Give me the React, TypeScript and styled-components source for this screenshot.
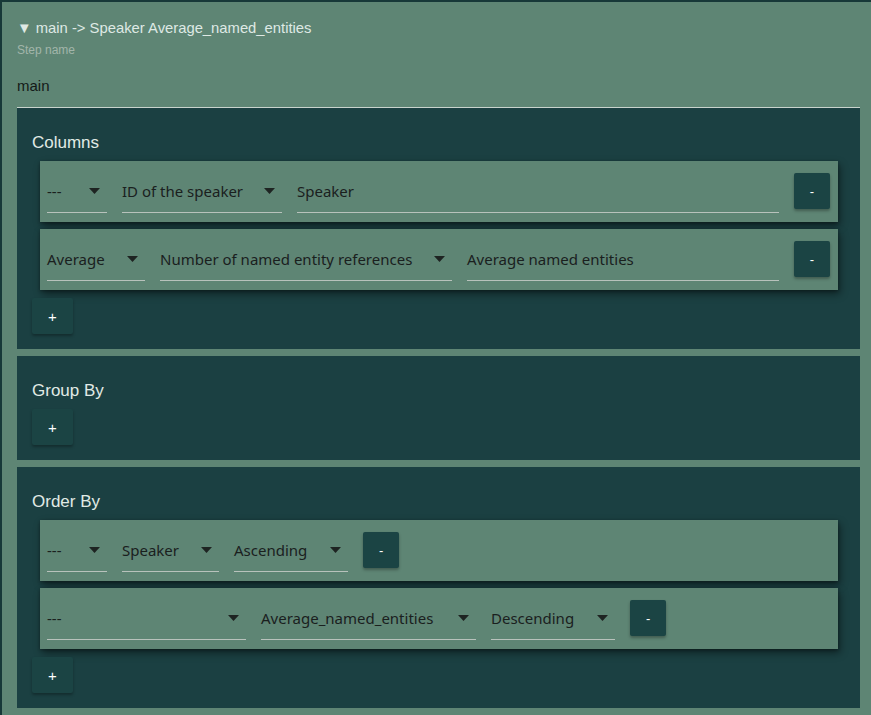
import React from 'react';
import styled, { createGlobalStyle } from 'styled-components';

const GlobalStyle = createGlobalStyle`
  html, body {
    margin: 0;
    padding: 0;
    background: #173838;
    overflow: hidden;
  }
`;

type Field = { label: string; width?: number; input?: boolean };
type RowData = { fields: Field[] };

const columns: RowData[] = [
    {
        fields: [
            { label: '---', width: 60 },
            { label: 'ID of the speaker', width: 160 },
            { label: 'Speaker', input: true },
        ],
    },
    {
        fields: [
            { label: 'Average', width: 98 },
            { label: 'Number of named entity references', width: 292 },
            { label: 'Average named entities', input: true },
        ],
    },
];

const orderBy: RowData[] = [
    {
        fields: [
            { label: '---', width: 60 },
            { label: 'Speaker', width: 97 },
            { label: 'Ascending', width: 114 },
        ],
    },
    {
        fields: [
            { label: '---', width: 199 },
            { label: 'Average_named_entities', width: 215 },
            { label: 'Descending', width: 124 },
        ],
    },
];

const Caret = () => (
    <svg width="11" height="6" viewBox="0 0 11 6">
        <path d="M0 0 L11 0 L5.5 6 Z" fill="#1e2422" />
    </svg>
);

const Row = ({ row }: { row: RowData }) => (
    <StyledRow>
        {row.fields.map((f, i) =>
            f.input ? (
                <TextField key={i}>{f.label}</TextField>
            ) : (
                <Select key={i} $width={f.width}>
                    <span>{f.label}</span>
                    <Caret />
                </Select>
            )
        )}
        <Button>-</Button>
    </StyledRow>
);

const Section = ({ title, rows }: { title: string; rows: RowData[] }) => (
    <Panel>
        <Heading>{title}</Heading>
        {rows.map((r, i) => (
            <Row key={i} row={r} />
        ))}
        <AddButton>+</AddButton>
    </Panel>
);

export default function App() {
    return (
        <>
            <GlobalStyle />
            <Page>
                <Title>▼ main -&gt; Speaker Average_named_entities</Title>
                <Label>Step name</Label>
                <NameInput>main</NameInput>
                <Section title="Columns" rows={columns} />
                <Section title="Group By" rows={[]} />
                <Section title="Order By" rows={orderBy} />
            </Page>
        </>
    );
}

const Page = styled.div`
  margin: 2px 0 0 2px;
  height: 713px;
  background: #5e8574;
  padding: 0 11px 0 15px;
  box-sizing: border-box;
  font-family: "Liberation Sans", Arial, sans-serif;
`
const Title = styled.div`
  padding-top: 17px;
  line-height: 18px;
  font-size: 14.8px;
  color: #dfe9e4;
`
const Label = styled.div`
  margin-top: 6px;
  line-height: 14px;
  font-size: 12px;
  color: #a2b5aa;
`
const NameInput = styled.div`
  margin-top: 6px;
  height: 44px;
  line-height: 46px;
  border-bottom: 1px solid #c9d3cd;
  font-size: 15px;
  color: #141a18;
`
const Panel = styled.div`
  background: #1b4042;
  padding: 26px 22px 15px 15px;
  margin-bottom: 7px;
`
const Heading = styled.div`
  font-size: 17px;
  line-height: 18px;
  color: #e1ebe6;
  margin-bottom: 9px;
`
const StyledRow = styled.div`
  display: flex;
  align-items: center;
  gap: 15px;
  background: #5e8574;
  margin: 0 0 7px 8px;
  padding: 8px 8px 9px 7px;
  box-shadow: 2px 4px 8px rgba(0, 0, 0, 0.45), 0 1px 3px rgba(0, 0, 0, 0.3);
  font-family: "Noto Sans", "Open Sans", sans-serif;
  font-size: 15px;
  color: #1a201e;
`
const Select = styled.div<{ $width?: number }>`
  width: ${p => p.$width}px;
  box-sizing: border-box;
  height: 44px;
  display: flex;
  align-items: center;
  justify-content: space-between;
  padding-right: 7px;
  border-bottom: 1px solid #b8c2bc;
  flex-shrink: 0;
`
const TextField = styled.div`
  flex: 1;
  box-sizing: border-box;
  height: 44px;
  display: flex;
  align-items: center;
  border-bottom: 1px solid #b8c2bc;
`
const Button = styled.button`
  height: 36px;
  padding: 0 16px;
  border: none;
  border-radius: 2px;
  background: #1b4444;
  color: #ffffff;
  font-family: "Liberation Sans", Arial, sans-serif;
  font-size: 13px;
  box-shadow: 0 2px 3px rgba(0, 0, 0, 0.3);
  flex-shrink: 0;
`
const AddButton = styled(Button)`
  display: block;
  margin-top: 8px;
  width: 41px;
  padding: 0;
  font-size: 15px;
`
